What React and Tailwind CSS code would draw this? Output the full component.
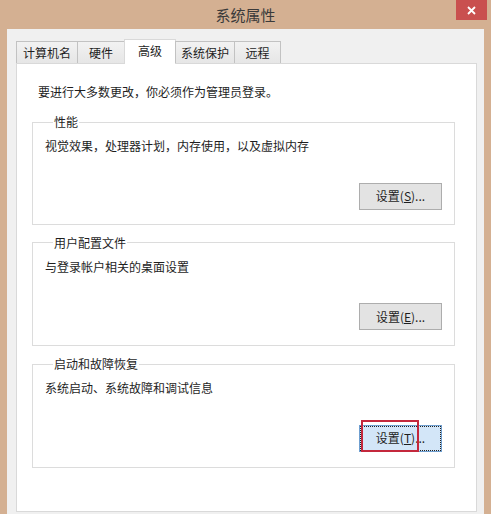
import React from 'react';

const tabs = [
    { label: '计算机名', width: 'w-[62px]' },
    { label: '硬件', width: 'w-[48px]' },
    { label: '高级', width: 'w-[52px]', active: true },
    { label: '系统保护', width: 'w-[60px]' },
    { label: '远程', width: 'w-[47px]' },
];

const groups = [
    { title: '性能', text: '视觉效果，处理器计划，内存使用，以及虚拟内存', key: 'S' },
    { title: '用户配置文件', text: '与登录帐户相关的桌面设置', key: 'E' },
    { title: '启动和故障恢复', text: '系统启动、系统故障和调试信息', key: 'T', focused: true },
];

const SettingsButton = ({ hotkey, focused }) => (
    <div className="relative">
        <button
          type="button"
          className={focused
              ? 'w-[83px] h-[27px] border border-[#6f9fd0] bg-[#d3e6f8] outline-1 outline-dotted outline-offset-[-2px] outline-[#222] text-[12px] leading-none text-[#1e1e1e]'
              : 'w-[83px] h-[27px] border border-[#adadad] bg-[#e3e3e3] text-[12px] leading-none text-[#1e1e1e]'}
        >
            设置(<u>{hotkey}</u>)...
        </button>
        {focused && (
            <div className="absolute left-[2px] top-[-4px] w-[58px] h-[32px] border-2 border-[#c4283c] pointer-events-none"/>
        )}
    </div>
);

const GroupBox = ({ title, text, hotkey, focused, className }) => (
    <fieldset className={`border border-[#dcdcdc] pl-[12px] pr-[12px] ${className}`}>
        <legend className="ml-[8px] px-[1px] text-[12px] leading-[16px]">{title}</legend>
        <p className="mt-[8px] text-[12px] leading-[16px]">{text}</p>
        <div className="mt-[28px] flex justify-end">
            <SettingsButton hotkey={hotkey} focused={focused}/>
        </div>
    </fieldset>
);

export default function App() {
    return (
        <div className="w-[491px] h-[514px] overflow-hidden bg-[#d4b092] flex flex-col font-['Noto_Sans_CJK_SC','Microsoft_YaHei',sans-serif] text-[#1e1e1e]">
            <div className="relative h-[29px] flex items-center justify-center">
                <span className="text-[15px] leading-none text-[#3a3a3a]">系统属性</span>
                <div className="absolute top-0 right-[4px] w-[31px] h-[20px] bg-[#c9504f] flex items-center justify-center">
                    <svg width="9" height="9" viewBox="0 0 9 9">
                        <path d="M1 1 L8 8 M8 1 L1 8" stroke="#fff" strokeWidth="1.8"/>
                    </svg>
                </div>
            </div>
            <div className="flex-1 mx-[7px] bg-[#f0f0f0] pt-[10px] pl-[9px] pr-[7px] pb-[2px] flex flex-col">
                <div className="relative z-10 -mb-px flex items-end h-[25px]">
                    {tabs.map((t, i) => (
                        <div
                          key={t.label}
                          className={t.active
                              ? `${t.width} ${i > 0 ? '-ml-px' : ''} h-[25px] bg-white border border-b-0 border-[#d9d9d9] flex items-center justify-center pb-[3px] text-[12px] leading-none`
                              : `${t.width} ${i > 0 ? '-ml-px' : ''} h-[22px] mb-px bg-gradient-to-b from-[#f2f2f2] to-[#e6e6e6] border border-b-0 border-[#c2c2c2] flex items-center justify-center text-[12px] leading-none`}
                        >
                            {t.label}
                        </div>
                    ))}
                </div>
                <div className="flex-1 bg-white border border-[#d9d9d9] pt-[20px] pl-[15px] pr-[21px]">
                    <p className="ml-[6px] text-[12px] leading-[16px]">要进行大多数更改，你必须作为管理员登录。</p>
                    {groups.map((g, i) => (
                        <GroupBox
                          key={g.title}
                          title={g.title}
                          text={g.text}
                          hotkey={g.key}
                          focused={g.focused}
                          className={i === 0 ? 'mt-[14px] pb-[14px]' : 'mt-[10px] pb-[15px]'}
                        />
                    ))}
                </div>
            </div>
        </div>
    );
}
